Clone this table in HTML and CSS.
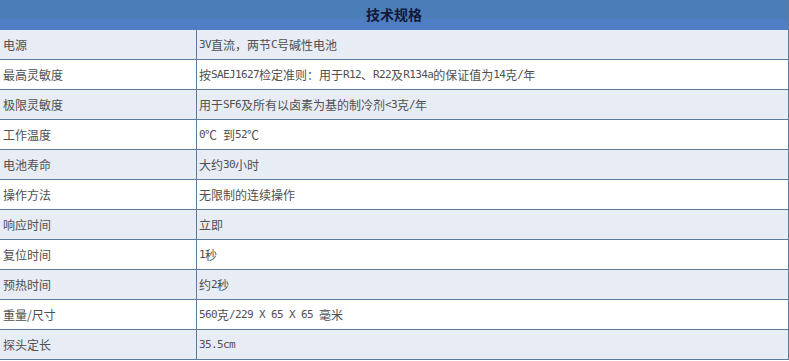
FILE: index.html
```html
<!DOCTYPE html>
<html lang="zh-CN">
<head>
<meta charset="utf-8">
<title>技术规格</title>
<link rel="stylesheet" href="styles.css">
</head>
<body>
<div class="spec">
  <div class="spec-head">技术规格</div>
  <div class="spec-row alt"><div class="k">电源</div><div class="v"><span class="en">3V</span>直流，两节<span class="en">C</span>号碱性电池</div></div>
  <div class="spec-row"><div class="k">最高灵敏度</div><div class="v">按<span class="en">SAEJ1627</span>检定准则：用于<span class="en">R12</span>、<span class="en">R22</span>及<span class="en">R134a</span>的保证值为<span class="en">14</span>克<span class="en">/</span>年</div></div>
  <div class="spec-row alt"><div class="k">极限灵敏度</div><div class="v">用于<span class="en">SF6</span>及所有以卤素为基的制冷剂<span class="en">&lt;3</span>克<span class="en">/</span>年</div></div>
  <div class="spec-row"><div class="k">工作温度</div><div class="v"><span class="en">0</span>℃<span class="en">&nbsp;</span>到<span class="en">52</span>℃</div></div>
  <div class="spec-row alt"><div class="k">电池寿命</div><div class="v">大约<span class="en">30</span>小时</div></div>
  <div class="spec-row"><div class="k">操作方法</div><div class="v">无限制的连续操作</div></div>
  <div class="spec-row alt"><div class="k">响应时间</div><div class="v">立即</div></div>
  <div class="spec-row"><div class="k">复位时间</div><div class="v"><span class="en">1</span>秒</div></div>
  <div class="spec-row alt"><div class="k">预热时间</div><div class="v">约<span class="en">2</span>秒</div></div>
  <div class="spec-row"><div class="k">重量/尺寸</div><div class="v"><span class="en">560</span>克<span class="en">/229&nbsp;X&nbsp;65&nbsp;X&nbsp;65&nbsp;</span>毫米</div></div>
  <div class="spec-row alt"><div class="k">探头定长</div><div class="v"><span class="en">35.5cm</span></div></div>
</div>
</body>
</html>
```
FILE: styles.css
```css
html, body {
  margin: 0;
  padding: 0;
  background: #ffffff;
}
.spec {
  width: 789px;
  box-sizing: border-box;
  border-right: 1px solid #5d7b9a;
  font-family: "Noto Sans CJK SC", sans-serif;
  font-size: 12px;
  color: #505050;
}
.spec-head {
  height: 30px;
  box-sizing: border-box;
  padding-bottom: 3px;
  display: flex;
  align-items: center;
  justify-content: center;
  background: linear-gradient(#4b7db7 0, #4b7db7 19px, #4f7ec5 19px, #4f7ec5 30px);
  color: #13183a;
  font-size: 14px;
  font-weight: bold;
}
.spec-row {
  display: grid;
  grid-template-columns: 197px 1fr;
  height: 30px;
  box-sizing: border-box;
  border-bottom: 1px solid #5d7b9a;
  background: #ffffff;
}
.spec-row.alt {
  background: #e7ecf5;
}
.k, .v {
  display: flex;
  align-items: center;
  white-space: nowrap;
}
.k {
  padding-left: 3px;
  border-right: 1px solid #5d7b9a;
}
.v {
  padding-left: 2px;
}
.en {
  font-family: "DejaVu Sans Mono", monospace;
  font-size: 11px;
  letter-spacing: -0.62px;
  white-space: pre;
}
```
